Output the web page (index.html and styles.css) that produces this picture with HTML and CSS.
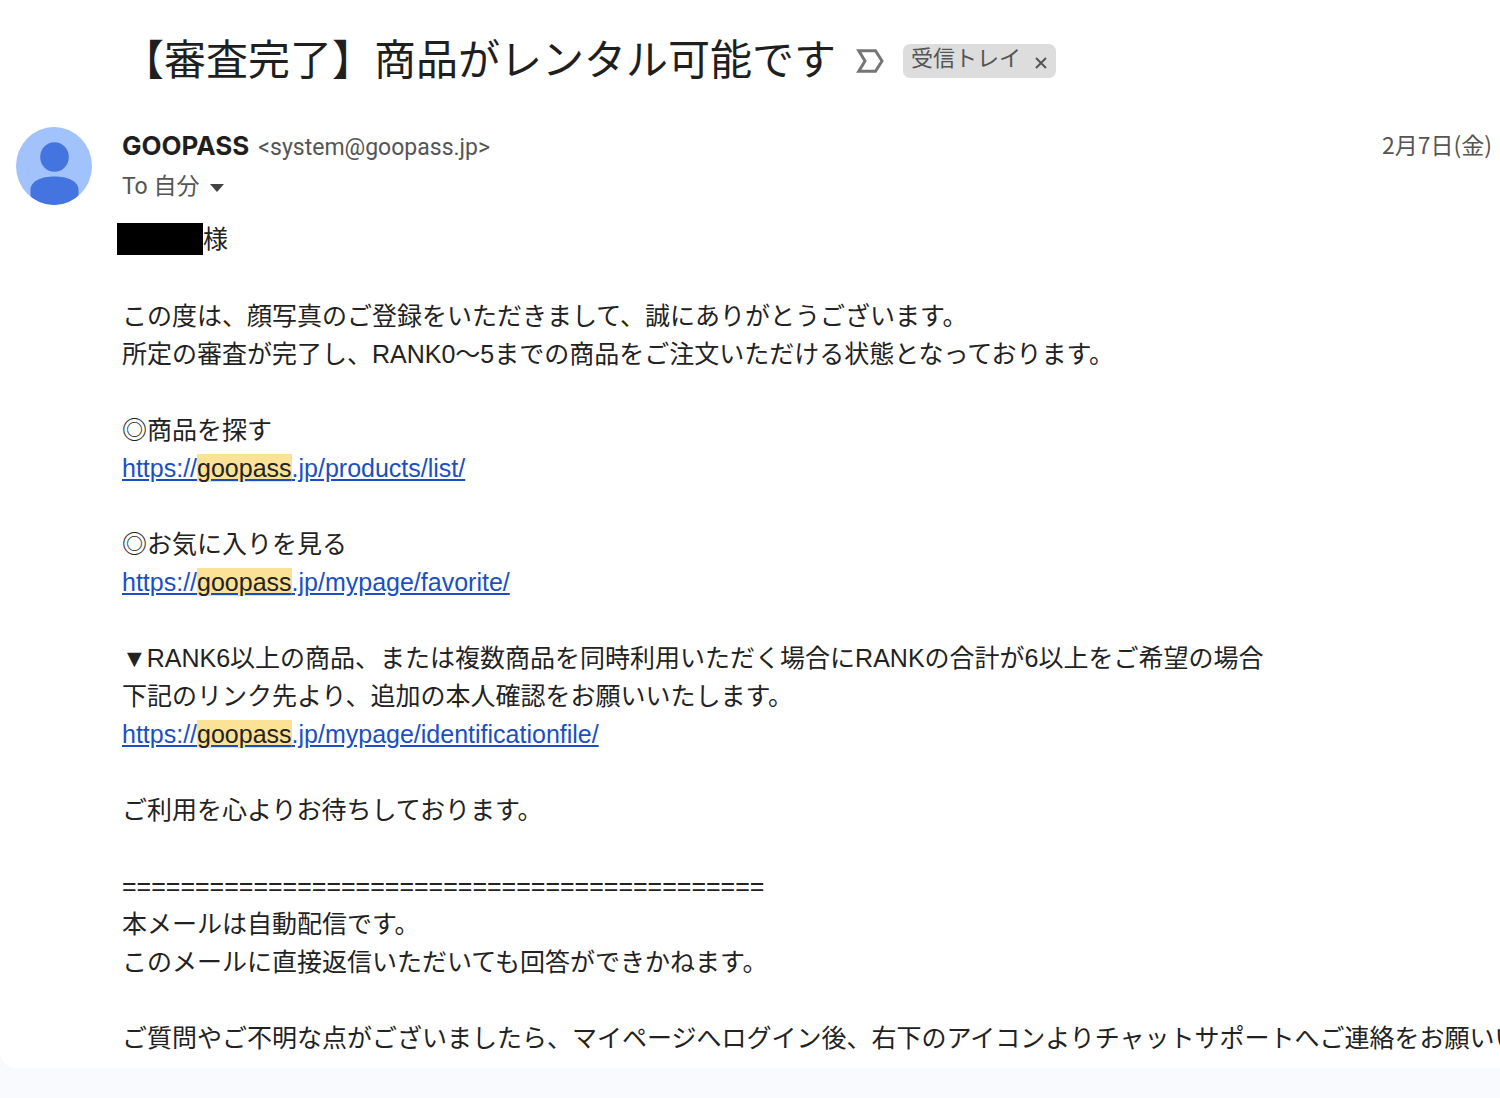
FILE: index.html
```html
<!DOCTYPE html>
<html lang="ja">
<head>
<meta charset="utf-8">
<meta name="viewport" content="width=device-width, initial-scale=1">
<title>【審査完了】商品がレンタル可能です</title>
<link rel="stylesheet" href="styles.css">
</head>
<body>
<main class="mail">
  <header class="subject">
    <h1 class="subject-text">【審査完了】商品がレンタル可能です</h1>
    <button class="important" type="button" aria-label="重要マーク">
      <svg width="28" height="24" viewBox="0 0 28 24" fill="none" stroke="#757575" stroke-width="3"><path d="M2.800 1.800H19.500L26 12l-6.500 10.200H2.800L9 12z"/></svg>
    </button>
    <span class="chip"><span class="chip-label">受信トレイ</span>
      <button class="chip-close" type="button" aria-label="ラベルを削除">
        <svg width="12" height="12" viewBox="0 0 12 12" fill="none" stroke="#555" stroke-width="2"><path d="M1 1l10 10M11 1L1 11"/></svg>
      </button>
    </span>
  </header>

  <section class="sender">
    <svg class="avatar" width="76" height="78" viewBox="0 0 76 78" role="img" aria-label="GOOPASS">
      <defs><clipPath id="disc"><ellipse cx="38" cy="39" rx="38" ry="39"/></clipPath></defs>
      <g clip-path="url(#disc)">
        <rect width="76" height="78" fill="#a1c2fb"/>
        <ellipse cx="38.500" cy="30" rx="14.300" ry="14.700" fill="#4374e0"/>
        <path d="M14.500 78V63c0-9 11-13.500 24-13.500S62.500 54 62.500 63v15z" fill="#4374e0"/>
      </g>
    </svg>
    <div class="who">
      <div class="from"><span class="name">GOOPASS</span><span class="address">&lt;system@goopass.jp&gt;</span></div>
      <button class="to" type="button">To 自分
        <svg width="14" height="8" viewBox="0 0 14 8" fill="#444"><path d="M0 0h14L7 8z"/></svg>
      </button>
    </div>
    <time class="date" datetime="2025-02-07">2月7日(金)</time>
  </section>

  <article class="body">
    <p class="addressee"><span class="redacted"></span>様</p>
    <p>この度は、顔写真のご登録をいただきまして、誠にありがとうございます。<br>
    所定の審査が完了し、RANK0～5までの商品をご注文いただける状態となっております。</p>
    <p>◎商品を探す<br>
    <a href="https://goopass.jp/products/list/">https://<mark>goopass</mark>.jp/products/list/</a></p>
    <p>◎お気に入りを見る<br>
    <a href="https://goopass.jp/mypage/favorite/">https://<mark>goopass</mark>.jp/mypage/favorite/</a></p>
    <p>▼RANK6以上の商品、または複数商品を同時利用いただく場合にRANKの合計が6以上をご希望の場合<br>
    下記のリンク先より、追加の本人確認をお願いいたします。<br>
    <a href="https://goopass.jp/mypage/identificationfile/">https://<mark>goopass</mark>.jp/mypage/identificationfile/</a></p>
    <p>ご利用を心よりお待ちしております。</p>
    <p>============================================<br>
    本メールは自動配信です。<br>
    このメールに直接返信いただいても回答ができかねます。</p>
    <p>ご質問やご不明な点がございましたら、マイページへログイン後、右下のアイコンよりチャットサポートへご連絡をお願いい</p>
  </article>
</main>
</body>
</html>
```
FILE: styles.css
```css
* { box-sizing: border-box; }

body {
  margin: 0;
  background: #f8fafd;
  color: #222;
  font-family: "Liberation Sans", "Noto Sans CJK JP", sans-serif;
  font-size: 25px;
}

button {
  padding: 0;
  border: 0;
  background: none;
  color: inherit;
  font: inherit;
}

svg { display: block; }

.mail {
  padding: 32px 0 11px;
  background: #fff;
  border-radius: 0 0 0 16px;
  overflow: hidden;
}

.subject {
  display: flex;
  align-items: center;
  padding-left: 122px;
}

.subject-text {
  margin: 0;
  color: #1f1f1f;
  font-size: 42px;
  font-weight: 400;
  line-height: 58px;
}

.important { margin: 0 19px 0 20px; }

.chip {
  display: flex;
  align-items: center;
  gap: 14px;
  height: 34px;
  padding: 0 9px 0 8px;
  border-radius: 7px;
  background: #ddd;
  color: #555;
  font-size: 22px;
  white-space: nowrap;
}

.chip-label {
  padding-bottom: 4px;
  line-height: 30px;
}

.chip-close { padding-top: 3px; }

.sender {
  display: flex;
  align-items: flex-start;
  padding: 37px 8px 0 16px;
  color: #555;
  font-family: Roboto, "Noto Sans CJK JP", sans-serif;
  font-size: 23px;
}

.avatar { flex: none; }

.who {
  flex: 1;
  margin-left: 30px;
}

.from {
  display: flex;
  align-items: baseline;
  gap: 9px;
  line-height: 38px;
}

.name {
  color: #1f1f1f;
  font-family: Inter, sans-serif;
  font-size: 26px;
  font-weight: 700;
}

.to {
  display: flex;
  align-items: center;
  gap: 11px;
  line-height: 40px;
}

.to svg { margin-top: 2px; }

.date {
  font-family: "Noto Sans CJK JP", sans-serif;
  line-height: 34px;
}

.body {
  padding: 13px 0 0 122px;
  line-height: 38px;
  white-space: nowrap;
}

.body p { margin: 0 0 38px; }

.body p:last-child { margin-bottom: 0; }

.body .addressee {
  display: flex;
  align-items: center;
  margin: 0 0 39px -5px;
}

.redacted {
  width: 86px;
  height: 32px;
  background: #000;
}

.body a { color: #1a4fc4; }

.body mark {
  background: #fce297;
  color: #222;
}
```
